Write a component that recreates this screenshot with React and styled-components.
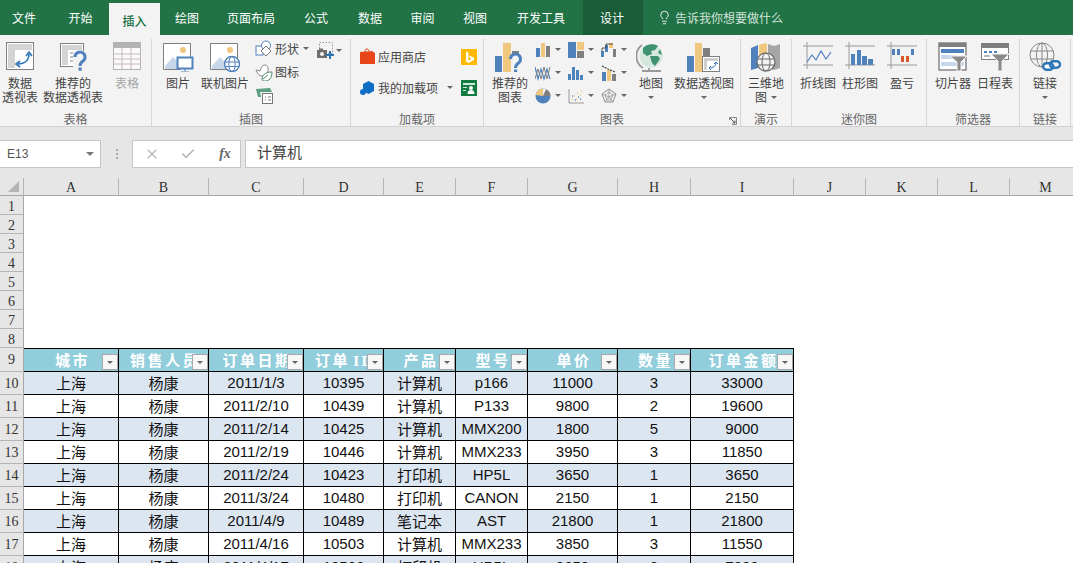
import styled, { createGlobalStyle } from 'styled-components'
import { X, Check, Lightbulb } from 'lucide-react'

const BLUE = '#4f81bd'
const ORANGE = '#f0c77e'
const GREY = '#7f7f7f'
const LIGHT = '#c6d7e9'
const CJK = '"Noto Sans CJK SC", "Noto Sans", sans-serif'

const GlobalStyle = createGlobalStyle`
  html, body { margin: 0; padding: 0; background: #fff; }
  * { box-sizing: border-box; }
`

const Page = styled.div`
  width: 1073px;
  height: 563px;
  overflow: hidden;
  display: flex;
  flex-direction: column;
  font-family: ${CJK};
  font-size: 12px;
  color: #444;
`

/* tabs */
const TabBar = styled.div`
  height: 35px;
  flex: none;
  display: flex;
  align-items: flex-end;
  background: #217346;
`
const Tab = styled.div`
  width: ${(p) => p.$w}px;
  height: ${(p) => (p.$active ? 32 : 35)}px;
  display: flex;
  align-items: center;
  justify-content: center;
  padding-top: ${(p) => (p.$active ? 2 : 0)}px;
  padding-bottom: ${(p) => (p.$active ? 0 : 1)}px;
  padding-right: ${(p) => p.$nudge || 0}px;
  color: ${(p) => (p.$active ? '#217346' : '#fff')};
  background: ${(p) => (p.$active ? '#f3f3f3' : p.$dark ? '#1b5c38' : 'transparent')};
  font-weight: ${(p) => (p.$active ? 500 : 400)};
`
const TellMe = styled.div`
  height: 35px;
  display: flex;
  align-items: center;
  gap: 3px;
  padding: 0 0 1px 14px;
  color: #d3e3da;
`

/* ribbon */
const Ribbon = styled.div`
  height: 92px;
  flex: none;
  display: flex;
  padding-top: 4px;
  background: #f3f3f3;
  border-bottom: 1px solid #d2d2d2;
`
const Group = styled.div`
  position: relative;
  width: ${(p) => p.$w}px;
  flex: none;
  display: flex;
  flex-direction: column;
  border-right: 1px solid #d6d6d6;
`
const GroupBody = styled.div`
  height: 72px;
  display: flex;
  padding-left: ${(p) => p.$pad || 0}px;
`
const GroupLabel = styled.div`
  height: 15px;
  line-height: 15px;
  text-align: center;
  color: #666;
`
const Launcher = styled.svg`
  position: absolute;
  right: 3px;
  bottom: 1px;
  width: 8px;
  height: 8px;
`
const BigButton = styled.div`
  width: ${(p) => p.$w}px;
  flex: none;
  display: flex;
  flex-direction: column;
  align-items: center;
  padding-top: 3px;
  line-height: 14px;
  white-space: nowrap;
  text-align: center;
  color: ${(p) => (p.$disabled ? '#a6a6a6' : '#444')};
`
const BigIcon = styled.div`
  height: 34px;
  flex: none;
`
const SmallColumn = styled.div`
  margin-left: 3px;
  margin-top: -2px;
  width: 60px;
  display: flex;
  flex-direction: column;
`
const SmallButton = styled.div`
  height: 23px;
  display: flex;
  align-items: center;
  gap: 2px;
  white-space: nowrap;
`
const Caret = styled.span`
  display: inline-block;
  flex: none;
  width: 0;
  height: 0;
  margin-left: ${(p) => p.$gap || 0}px;
  border-left: ${(p) => p.$size || 3}px solid transparent;
  border-right: ${(p) => p.$size || 3}px solid transparent;
  border-top: ${(p) => p.$size || 3}px solid ${(p) => p.$color || '#666'};
`
const CaretLine = styled.div`
  height: 14px;
  display: flex;
  align-items: center;
  justify-content: center;
`
const CaptureSlot = styled.div`
  margin-left: 1px;
  height: 23px;
  display: flex;
  align-items: center;
  gap: 2px;
`
const AddinGrid = styled.div`
  display: grid;
  grid-template-columns: 101px 16px;
  grid-auto-rows: 31px;
  padding-top: 2px;
  align-items: center;
`
const AddinButton = styled.div`
  display: flex;
  align-items: center;
  gap: 3px;
`
const ChartGrid = styled.div`
  margin: -1px 0 0 4px;
  width: 99px;
  display: grid;
  grid-template-columns: repeat(3, 33px);
  grid-auto-rows: 23px;
`
const ChartButton = styled.div`
  display: flex;
  align-items: center;
  gap: 4px;
  padding-left: 1px;
`

/* formula bar */
const FormulaBar = styled.div`
  height: 51px;
  flex: none;
  display: flex;
  padding-top: 13px;
  padding-bottom: 10px;
  background: #e6e6e6;
`
const NameBox = styled.div`
  width: 101px;
  flex: none;
  display: flex;
  align-items: center;
  justify-content: space-between;
  padding: 0 6px 0 7px;
  background: #fff;
  border: 1px solid #c6c6c6;
  border-left: 0;
  font-family: "Liberation Sans", sans-serif;
  color: #555;
`
const Dots = styled.div`
  width: 31px;
  flex: none;
  display: flex;
  flex-direction: column;
  align-items: center;
  justify-content: center;
  gap: 2px;
  span {
    width: 2px;
    height: 2px;
    background: #a8a8a8;
  }
`
const FormulaButtons = styled.div`
  width: 109px;
  flex: none;
  display: flex;
  align-items: center;
  gap: 20px;
  padding-left: 11px;
  background: #fff;
  border: 1px solid #c6c6c6;
`
const Fx = styled.span`
  width: 18px;
  text-align: center;
  font: italic bold 14px "Liberation Serif", serif;
  color: #666;
`
const FormulaInput = styled.div`
  flex: 1;
  margin-left: 4px;
  display: flex;
  align-items: center;
  padding: 0 0 5px 11px;
  background: #fff;
  border: 1px solid #c6c6c6;
  border-right: 0;
  font-size: 15px;
  color: #444;
`

/* sheet */
const Sheet = styled.div`
  flex: 1;
  min-height: 0;
  overflow: hidden;
  display: grid;
  width: 1082px;
  grid-template-columns: 24px 95px 90px 95px 80px 72px 72px 90px 73px 103px 72px 72px 72px 72px;
  grid-template-rows: 18px repeat(8, 19px) 24px repeat(9, 23px);
  background: #fff;
`
const Corner = styled.div`
  display: flex;
  align-items: flex-end;
  justify-content: flex-end;
  padding: 0 4px 3px 0;
  background: #e6e6e6;
  border-right: 1px solid #b5b5b5;
  border-bottom: 1px solid #a6a6a6;
`
const ColHead = styled.div`
  display: flex;
  align-items: center;
  justify-content: center;
  padding-top: 3px;
  background: #e6e6e6;
  border-right: 1px solid #b5b5b5;
  border-bottom: 1px solid #a6a6a6;
  font: 14px "Liberation Serif", serif;
  color: #333;
`
const RowHead = styled.div`
  display: flex;
  align-items: center;
  justify-content: center;
  padding-top: ${(p) => p.$low || 1}px;
  background: #e6e6e6;
  border-right: 1px solid #a6a6a6;
  border-bottom: 1px solid #b5b5b5;
  font: 14px "Liberation Serif", serif;
  color: #333;
`
const Blank = styled.div`
  grid-column: ${(p) => p.$from} / -1;
`
const HeadCell = styled.div`
  position: relative;
  overflow: hidden;
  display: flex;
  align-items: center;
  justify-content: center;
  padding: 0 0 1px 3px;
  white-space: nowrap;
  background: #92cddc;
  border-top: 1px solid #000;
  border-right: 1px solid #000;
  border-bottom: 1px solid #000;
  font: bold 15px "Liberation Serif", ${CJK};
  letter-spacing: 2.5px;
  word-spacing: -3px;
  color: #fff;
`
const FilterButton = styled.span`
  position: absolute;
  right: 0;
  bottom: 1px;
  width: 16px;
  height: 16px;
  display: flex;
  align-items: center;
  justify-content: center;
  background: #f7f7f7;
  border: 1px solid #a9a9a9;
`
const Cell = styled.div`
  display: flex;
  align-items: center;
  justify-content: center;
  padding-bottom: 2px;
  white-space: nowrap;
  background: ${(p) => (p.$striped ? '#dce6f1' : '#fff')};
  border-right: 1px solid #000;
  border-bottom: 1px solid #000;
  font: 15px "Liberation Sans", ${CJK};
  color: #111;
`

const Svg = ({ w = 30, h = 30, children }) => (
  <svg width={w} height={h} viewBox={`0 0 ${w} ${h}`} fill="none">
    {children}
  </svg>
)

const QuestionMark = ({ x, y }) => (
  <g transform={`translate(${x} ${y})`}>
    <path d="M1.5 6a5 5 0 1 1 8 4c-2 1.4-3 2.4-3 5" stroke={BLUE} strokeWidth="3" />
    <rect x="5" y="16.5" width="3.2" height="3.2" fill={BLUE} />
  </g>
)

const PivotIcon = () => (
  <Svg>
    <rect x="1.5" y="0.5" width="27" height="27" fill="#fff" stroke={GREY} />
    <rect x="3" y="2" width="24" height="6" fill="#d4d4d4" />
    <rect x="3" y="2" width="7" height="24" fill="#d4d4d4" />
    <path d="M13 22c7 0 11-4 11-10" stroke="#2e75b6" strokeWidth="1.6" />
    <path d="M21 14l3-4 3 4M15 19l-4 3 4 3" stroke="#2e75b6" strokeWidth="1.6" />
  </Svg>
)
const RecommendPivotIcon = () => (
  <Svg>
    <rect x="2.5" y="1.5" width="23" height="23" fill="#fff" stroke={GREY} />
    <rect x="4" y="3" width="20" height="5" fill="#d4d4d4" />
    <rect x="4" y="3" width="6" height="20" fill="#d4d4d4" />
    <path d="M12 11h10M12 15h5M12 19h4" stroke="#bdbdbd" strokeWidth="2" />
    <rect x="15" y="9" width="13" height="21" fill="#f3f3f3" />
    <QuestionMark x={15.5} y={9} />
  </Svg>
)
const TableIcon = () => (
  <Svg>
    <rect x="1.5" y="0.5" width="27" height="27" fill="#fafafa" stroke="#b3b3b3" />
    <rect x="1" y="0" width="28" height="6" fill="#b3b3b3" />
    <path d="M1 12h28M1 17h28M1 22h28M10 6v21M19 6v21" stroke="#c9b8b8" />
  </Svg>
)
const PictureBase = () => (
  <>
    <path d="M1.5 27.5v-26h27v18" stroke={GREY} fill="#fff" />
    <path d="M1.5 27.5h17" stroke={GREY} />
    <path d="M3 27v-3l8-9 6 6 3-2v8z" fill={LIGHT} />
    <circle cx="21" cy="8" r="3" fill={ORANGE} />
  </>
)
const PictureIcon = () => (
  <Svg w={32}>
    <PictureBase />
    <rect x="15.5" y="15.5" width="15" height="11" fill="#fff" stroke={BLUE} strokeWidth="2" />
    <path d="M23 27v2M19 30h8" stroke={BLUE} />
  </Svg>
)
const OnlinePictureIcon = () => (
  <Svg w={32}>
    <PictureBase />
    <circle cx="23" cy="22" r="7.5" fill="#fff" stroke={BLUE} strokeWidth="1.4" />
    <ellipse cx="23" cy="22" rx="3.2" ry="7.5" stroke={BLUE} />
    <path d="M16 20h14M16 24.5h14" stroke={BLUE} />
  </Svg>
)
const ShapesIcon = () => (
  <Svg w={18} h={18}>
    <rect x="1" y="6" width="7" height="9" fill="#fff" stroke={BLUE} />
    <circle cx="11" cy="5.5" r="4.5" fill="#fff" stroke={BLUE} />
    <path d="M11 6l5 5-5 5-5-5z" fill="#fff" stroke="#777" />
  </Svg>
)
const IconsIcon = () => (
  <Svg w={18} h={18}>
    <path d="M1 7l4 1c1-3 2-6 5-6 2 0 3 2 3 3v3c0 3-3 5-6 5-3 0-5-3-6-6z" stroke="#888" fill="#fff" />
    <path d="M7 17c0-5 3-8 10-8 0 6-3 9-7 9-1 0-2 0-3-1zM8 16l5-4" stroke="#4d8b6c" fill="#fff" />
  </Svg>
)
const ModelsIcon = () => (
  <Svg w={18} h={18}>
    <path d="M1 3l14-1 2 4H5l1 5-3 0z" fill="#5b9f82" />
    <rect x="7.5" y="7.5" width="10" height="10" fill="#fff" stroke="#777" />
    <path d="M10 11h1M13 11h3M10 14h1M13 14h3" stroke="#777" />
  </Svg>
)
const ScreenshotIcon = () => (
  <Svg w={18} h={18}>
    <rect x="3.5" y="0.5" width="13" height="11" stroke="#999" strokeDasharray="1.5 1.5" />
    <rect x="1" y="8" width="10" height="8" fill="#6e6e6e" />
    <rect x="3" y="6.5" width="4" height="2" fill="#6e6e6e" />
    <circle cx="6" cy="12" r="2" fill="#f3f3f3" />
    <path d="M14 9v8M10 13h8" stroke="#2e75b6" strokeWidth="2" />
  </Svg>
)
const StoreIcon = () => (
  <Svg w={15} h={17}>
    <path d="M5 4c0-4 3-4 4-1" stroke="#d83b01" />
    <path d="M0 4l12-1 3 2v11H0z" fill="#e8461a" />
  </Svg>
)
const AddinIcon = () => (
  <Svg w={15} h={16}>
    <path d="M8.5 1l5.5 3v7l-5.5 3L3 11V4z" fill="#0f6fc6" />
    <circle cx="3" cy="12" r="3" fill="#0f6fc6" />
  </Svg>
)
const BingIcon = () => (
  <Svg w={16} h={16}>
    <rect width="16" height="16" fill="#ffb900" />
    <path d="M5 2.5l2.5 1v8l3-1.5-1.5-1-1-2.5 5 2v2.5L7.5 14 5 12.5z" fill="#fff" />
  </Svg>
)
const PeopleIcon = () => (
  <Svg w={16} h={16}>
    <rect width="16" height="16" fill="#107c41" />
    <path d="M2 3h12v2H2zM2 7h4v1H2zM2 10h3v1H2z" fill="#cfe6da" />
    <circle cx="10" cy="8" r="2" fill="#fff" />
    <path d="M6.5 14c0-3 1.5-4 3.5-4s3.5 1 3.5 4z" fill="#fff" />
  </Svg>
)
const RecommendChartIcon = () => (
  <Svg w={32}>
    <rect x="1" y="14" width="7" height="16" fill={BLUE} />
    <rect x="9" y="1" width="8" height="29" fill={ORANGE} />
    <rect x="18" y="9" width="7" height="4" fill={GREY} />
    <QuestionMark x={15} y={11} />
  </Svg>
)

const chartIcons = [
  <Svg w={16} h={16} key="column">
    <rect x="1" y="6" width="4" height="9" fill={BLUE} />
    <rect x="6" y="1" width="4" height="14" fill={ORANGE} />
    <rect x="11" y="4" width="4" height="11" fill={GREY} />
  </Svg>,
  <Svg w={16} h={16} key="tree">
    <rect x="0" y="0" width="8" height="16" fill={BLUE} />
    <rect x="9" y="0" width="7" height="8" fill={ORANGE} />
    <rect x="9" y="9" width="7" height="7" fill={GREY} />
  </Svg>,
  <Svg w={16} h={16} key="waterfall">
    <rect x="0" y="9" width="3" height="6" fill={BLUE} />
    <rect x="4" y="3" width="3" height="7" fill={BLUE} />
    <rect x="8" y="1" width="4" height="5" fill={ORANGE} />
    <rect x="12" y="7" width="3" height="8" fill={GREY} />
    <path d="M1 9V6h4V2h7" stroke="#333" strokeWidth="0.8" />
  </Svg>,
  <Svg w={16} h={16} key="stock">
    <path d="M0 2l3 12 3-10 3 10 3-10 3 10" stroke={BLUE} strokeWidth="1.2" />
    <path d="M0 14l3-10 3 10 3-12 3 12 3-12" stroke={GREY} strokeWidth="1" />
  </Svg>,
  <Svg w={16} h={16} key="histogram">
    <rect x="0" y="9" width="3" height="6" fill={BLUE} />
    <rect x="4" y="2" width="3" height="13" fill={BLUE} />
    <rect x="8" y="5" width="3" height="10" fill={BLUE} />
    <rect x="12" y="10" width="3" height="5" fill={BLUE} />
  </Svg>,
  <Svg w={16} h={16} key="combo">
    <rect x="1" y="7" width="4" height="9" fill={BLUE} />
    <rect x="6" y="5" width="4" height="11" fill={ORANGE} />
    <rect x="11" y="9" width="4" height="7" fill={GREY} />
    <path d="M1 1l6 3 7 3" stroke="#444" strokeWidth="1.2" strokeDasharray="2 1" />
  </Svg>,
  <Svg w={16} h={16} key="pie">
    <circle cx="8" cy="8" r="7.5" fill={BLUE} />
    <path d="M8 8V.5A7.5 7.5 0 0 0 .6 7z" fill={ORANGE} />
    <path d="M8 8h7.5A7.5 7.5 0 0 0 8 .5z" fill="#f3f3f3" />
    <path d="M8 8h7.5A7.5 7.5 0 0 0 11 1.2z" fill={GREY} />
  </Svg>,
  <Svg w={16} h={16} key="scatter">
    <path d="M1 1v14h15" stroke="#999" />
    <path d="M4 11h1M6 8h1M8 11h1M9 5h1M12 7h1M13 3h1" stroke={ORANGE} strokeWidth="1.6" />
    <path d="M4 8h1M7 12h1M10 9h1M12 11h1" stroke={BLUE} strokeWidth="1.6" />
  </Svg>,
  <Svg w={16} h={16} key="radar">
    <path d="M8 1l7 5-3 8H4L1 6z" stroke="#8a8a8a" />
    <path d="M8 4l4 3-2 5H6L4 7zM8 1v8M15 6L8 9M12 14L8 9M4 14l4-5M1 6l7 3" stroke="#a6a6a6" />
  </Svg>,
]

const GlobeIcon = () => (
  <Svg>
    <path d="M6 3a14 14 0 0 0 1 23" stroke="#9a9a9a" strokeWidth="1.8" />
    <path d="M13 26v2M6 29h19" stroke="#9a9a9a" strokeWidth="1.8" />
    <circle cx="15" cy="14" r="11.5" fill="#d5e8dd" />
    <path d="M7 6c3-4 11-5 15-2l-3 4-4 1 1 3-5 2-4-3zM14 14l8 0 2 3-5 7-3-3zM24 7l2 6-4-2z" fill="#3f9270" />
  </Svg>
)
const PivotChartIcon = () => (
  <Svg w={34}>
    <rect x="0" y="14" width="7" height="16" fill={BLUE} />
    <rect x="8" y="1" width="7" height="29" fill={ORANGE} />
    <rect x="16" y="6" width="7" height="8" fill={GREY} />
    <rect x="15.5" y="14.5" width="17" height="15" fill="#fff" stroke={GREY} />
    <rect x="17" y="16" width="14" height="3" fill="#cfcfcf" />
    <rect x="17" y="16" width="3" height="12" fill="#cfcfcf" />
    <path d="M22 26c4 0 7-2 7-5" stroke="#2e75b6" />
    <path d="M27 22l2-2 2 2M24 24l-2 2 2 2" stroke="#2e75b6" />
  </Svg>
)
const Map3dIcon = () => (
  <Svg w={32}>
    <path d="M1 6l7-3v23l-7 2z" fill={BLUE} />
    <path d="M9 3l6-2 2 1v22L9 26z" fill={ORANGE} />
    <path d="M18 2l6 2 6-2v24l-6 2-6-2z" fill="#a6a6a6" />
    <circle cx="16" cy="20" r="9" fill="#f3f3f3" stroke="#666" strokeWidth="1.2" />
    <ellipse cx="16" cy="20" rx="4" ry="9" stroke="#666" />
    <path d="M7.5 17h17M7.5 23h17" stroke="#666" />
  </Svg>
)
const SparkFrame = () => (
  <path d="M4 0v27M0 4h30M0 23h30" stroke="#9a9a9a" strokeWidth="1" />
)
const SparkLineIcon = () => (
  <Svg>
    <SparkFrame />
    <path d="M4 20l5-7 4 5 5-9 5 8 5-7" stroke={BLUE} strokeWidth="1.2" />
  </Svg>
)
const SparkColumnIcon = () => (
  <Svg>
    <SparkFrame />
    <rect x="6" y="12" width="4" height="11" fill={BLUE} />
    <rect x="12" y="8" width="4" height="15" fill={BLUE} />
    <rect x="17" y="14" width="5" height="9" fill={BLUE} />
    <rect x="23" y="17" width="5" height="6" fill={BLUE} />
  </Svg>
)
const SparkWinLossIcon = () => (
  <Svg>
    <SparkFrame />
    <rect x="5" y="7" width="3" height="6" fill={BLUE} />
    <rect x="10" y="7" width="3" height="6" fill={BLUE} />
    <rect x="14" y="14" width="3" height="6" fill="#d9572b" />
    <rect x="19" y="14" width="3" height="6" fill="#d9572b" />
    <rect x="24" y="7" width="3" height="6" fill={BLUE} />
  </Svg>
)
const SlicerIcon = () => (
  <Svg>
    <rect x="1" y="1" width="27" height="27" fill="#fff" stroke={GREY} strokeWidth="1.4" />
    <rect x="1" y="1" width="27" height="4" fill={GREY} />
    <rect x="3" y="7" width="23" height="4" fill={BLUE} />
    <rect x="3" y="13" width="14" height="4" fill={LIGHT} />
    <rect x="3" y="20" width="23" height="4" fill={LIGHT} />
    <path d="M12 14h17l-6 6v9h-4v-9z" fill="#8a8a8a" stroke="#f3f3f3" />
  </Svg>
)
const TimelineIcon = () => (
  <Svg>
    <rect x="1.5" y="1.5" width="27" height="16" fill="#fff" stroke={GREY} />
    <rect x="1" y="1" width="28" height="5" fill={GREY} />
    <path d="M4 10h3M9 10h3M14 10h3" stroke={BLUE} strokeWidth="2" />
    <path d="M4 14h6" stroke="#bbb" strokeWidth="2" />
    <path d="M11 12h18l-7 7v10h-4V19z" fill="#8a8a8a" stroke="#f3f3f3" />
  </Svg>
)
const LinkIcon = () => (
  <Svg w={34}>
    <circle cx="14" cy="13" r="12" stroke="#888" />
    <ellipse cx="14" cy="13" rx="5.5" ry="12" stroke="#888" />
    <path d="M2.5 9h23M2.5 17h23M14 1v24" stroke="#888" />
    <rect x="15.2" y="21.2" width="10" height="6.5" rx="3.2" fill="#fff" stroke="#2e75b6" strokeWidth="2.4" />
    <rect x="22" y="19.2" width="10" height="6.5" rx="3.2" stroke="#2e75b6" strokeWidth="2.4" />
  </Svg>
)

const tabs = [
  { name: '文件', w: 52, nudge: 4 },
  { name: '开始', w: 57 },
  { name: '插入', w: 51, active: true },
  { name: '绘图', w: 54 },
  { name: '页面布局', w: 74 },
  { name: '公式', w: 56 },
  { name: '数据', w: 52 },
  { name: '审阅', w: 53 },
  { name: '视图', w: 52 },
  { name: '开发工具', w: 82, nudge: 2 },
  { name: '设计', w: 60, dark: true, nudge: 2 },
]

const columns = 'ABCDEFGHIJKLM'.split('')
const headers = ['城市', '销售人员', '订单日期', '订单 ID', '产品', '型号', '单价', '数量', '订单金额']
const rows = [
  ['上海', '杨康', '2011/1/3', 10395, '计算机', 'p166', 11000, 3, 33000],
  ['上海', '杨康', '2011/2/10', 10439, '计算机', 'P133', 9800, 2, 19600],
  ['上海', '杨康', '2011/2/14', 10425, '计算机', 'MMX200', 1800, 5, 9000],
  ['上海', '杨康', '2011/2/19', 10446, '计算机', 'MMX233', 3950, 3, 11850],
  ['上海', '杨康', '2011/2/24', 10423, '打印机', 'HP5L', 3650, 1, 3650],
  ['上海', '杨康', '2011/3/24', 10480, '打印机', 'CANON', 2150, 1, 2150],
  ['上海', '杨康', '2011/4/9', 10489, '笔记本', 'AST', 21800, 1, 21800],
  ['上海', '杨康', '2011/4/16', 10503, '计算机', 'MMX233', 3850, 3, 11550],
  ['上海', '杨康', '2011/4/17', 10506, '打印机', 'HP5L', 3650, 2, 7300],
]

const App = () => (
  <Page>
    <GlobalStyle />
    <TabBar>
      {tabs.map((t) => (
        <Tab key={t.name} $w={t.w} $active={t.active} $dark={t.dark} $nudge={t.nudge}>
          {t.name}
        </Tab>
      ))}
      <TellMe>
        <Lightbulb size={15} strokeWidth={1.4} color="#fff" />
        告诉我你想要做什么
      </TellMe>
    </TabBar>

    <Ribbon>
      <Group $w={152}>
        <GroupBody>
          <BigButton $w={40}>
            <BigIcon><PivotIcon /></BigIcon>
            数据<br />透视表
          </BigButton>
          <BigButton $w={66}>
            <BigIcon><RecommendPivotIcon /></BigIcon>
            推荐的<br />数据透视表
          </BigButton>
          <BigButton $w={42} $disabled>
            <BigIcon><TableIcon /></BigIcon>
            表格
          </BigButton>
        </GroupBody>
        <GroupLabel>表格</GroupLabel>
      </Group>

      <Group $w={199}>
        <GroupBody $pad={6}>
          <BigButton $w={40}>
            <BigIcon><PictureIcon /></BigIcon>
            图片
          </BigButton>
          <BigButton $w={54}>
            <BigIcon><OnlinePictureIcon /></BigIcon>
            联机图片
          </BigButton>
          <SmallColumn>
            <SmallButton>
              <ShapesIcon />形状<Caret $gap={2} />
            </SmallButton>
            <SmallButton>
              <IconsIcon />图标
            </SmallButton>
            <SmallButton>
              <ModelsIcon />
            </SmallButton>
          </SmallColumn>
          <CaptureSlot>
            <ScreenshotIcon /><Caret />
          </CaptureSlot>
        </GroupBody>
        <GroupLabel>插图</GroupLabel>
      </Group>

      <Group $w={133}>
        <GroupBody $pad={9}>
          <AddinGrid>
            <AddinButton><StoreIcon />应用商店</AddinButton>
            <BingIcon />
            <AddinButton>
              <AddinIcon />我的加载项<Caret $gap={6} />
            </AddinButton>
            <PeopleIcon />
          </AddinGrid>
        </GroupBody>
        <GroupLabel>加载项</GroupLabel>
      </Group>

      <Group $w={257}>
        <GroupBody $pad={6}>
          <BigButton $w={40}>
            <BigIcon><RecommendChartIcon /></BigIcon>
            推荐的<br />图表
          </BigButton>
          <ChartGrid>
            {chartIcons.map((icon) => (
              <ChartButton key={icon.key}>
                {icon}<Caret />
              </ChartButton>
            ))}
          </ChartGrid>
          <BigButton $w={36}>
            <BigIcon><GlobeIcon /></BigIcon>
            地图
            <CaretLine><Caret /></CaretLine>
          </BigButton>
          <BigButton $w={70}>
            <BigIcon><PivotChartIcon /></BigIcon>
            数据透视图
            <CaretLine><Caret /></CaretLine>
          </BigButton>
        </GroupBody>
        <GroupLabel>图表</GroupLabel>
        <Launcher viewBox="0 0 8 8" fill="none">
          <path d="M0.5 3V0.5H7.5V7.5H3" stroke="#888" />
          <path d="M1 1l5 5M3.5 6H6V3.5" stroke="#555" />
        </Launcher>
      </Group>

      <Group $w={51}>
        <GroupBody>
          <BigButton $w={50}>
            <BigIcon><Map3dIcon /></BigIcon>
            三维地
            <CaretLine>图<Caret $gap={4} /></CaretLine>
          </BigButton>
        </GroupBody>
        <GroupLabel>演示</GroupLabel>
      </Group>

      <Group $w={135}>
        <GroupBody $pad={5}>
          <BigButton $w={42}>
            <BigIcon><SparkLineIcon /></BigIcon>
            折线图
          </BigButton>
          <BigButton $w={42}>
            <BigIcon><SparkColumnIcon /></BigIcon>
            柱形图
          </BigButton>
          <BigButton $w={42}>
            <BigIcon><SparkWinLossIcon /></BigIcon>
            盈亏
          </BigButton>
        </GroupBody>
        <GroupLabel>迷你图</GroupLabel>
      </Group>

      <Group $w={93}>
        <GroupBody $pad={5}>
          <BigButton $w={42}>
            <BigIcon><SlicerIcon /></BigIcon>
            切片器
          </BigButton>
          <BigButton $w={42}>
            <BigIcon><TimelineIcon /></BigIcon>
            日程表
          </BigButton>
        </GroupBody>
        <GroupLabel>筛选器</GroupLabel>
      </Group>

      <Group $w={51}>
        <GroupBody>
          <BigButton $w={50}>
            <BigIcon><LinkIcon /></BigIcon>
            链接
            <CaretLine><Caret /></CaretLine>
          </BigButton>
        </GroupBody>
        <GroupLabel>链接</GroupLabel>
      </Group>
    </Ribbon>

    <FormulaBar>
      <NameBox>
        E13
        <Caret $color="#777" $size={4} />
      </NameBox>
      <Dots><span /><span /><span /></Dots>
      <FormulaButtons>
        <X size={16} strokeWidth={1.8} color="#b8b8b8" />
        <Check size={16} strokeWidth={2.4} color="#b8b8b8" />
        <Fx>fx</Fx>
      </FormulaButtons>
      <FormulaInput>计算机</FormulaInput>
    </FormulaBar>

    <Sheet>
      <Corner>
        <svg width="11" height="11" viewBox="0 0 11 11">
          <path d="M11 0v11H0z" fill="#b5b5b5" />
        </svg>
      </Corner>
      {columns.map((c) => (
        <ColHead key={c}>{c}</ColHead>
      ))}
      {[1, 2, 3, 4, 5, 6, 7, 8].flatMap((n) => [
        <RowHead key={n} $low={4}>{n}</RowHead>,
        <Blank key={`blank${n}`} $from={2} />,
      ])}
      <RowHead>9</RowHead>
      {headers.map((h) => (
        <HeadCell key={h}>
          {h}
          <FilterButton><Caret $color="#666" /></FilterButton>
        </HeadCell>
      ))}
      <Blank $from={11} />
      {rows.flatMap((row, r) => [
        <RowHead key={`row${r}`} $low={2}>{r + 10}</RowHead>,
        ...row.map((value, i) => (
          <Cell key={`${r}-${i}`} $striped={r % 2 === 0}>
            {value}
          </Cell>
        )),
        <Blank key={`rest${r}`} $from={11} />,
      ])}
    </Sheet>
  </Page>
)

export default App
